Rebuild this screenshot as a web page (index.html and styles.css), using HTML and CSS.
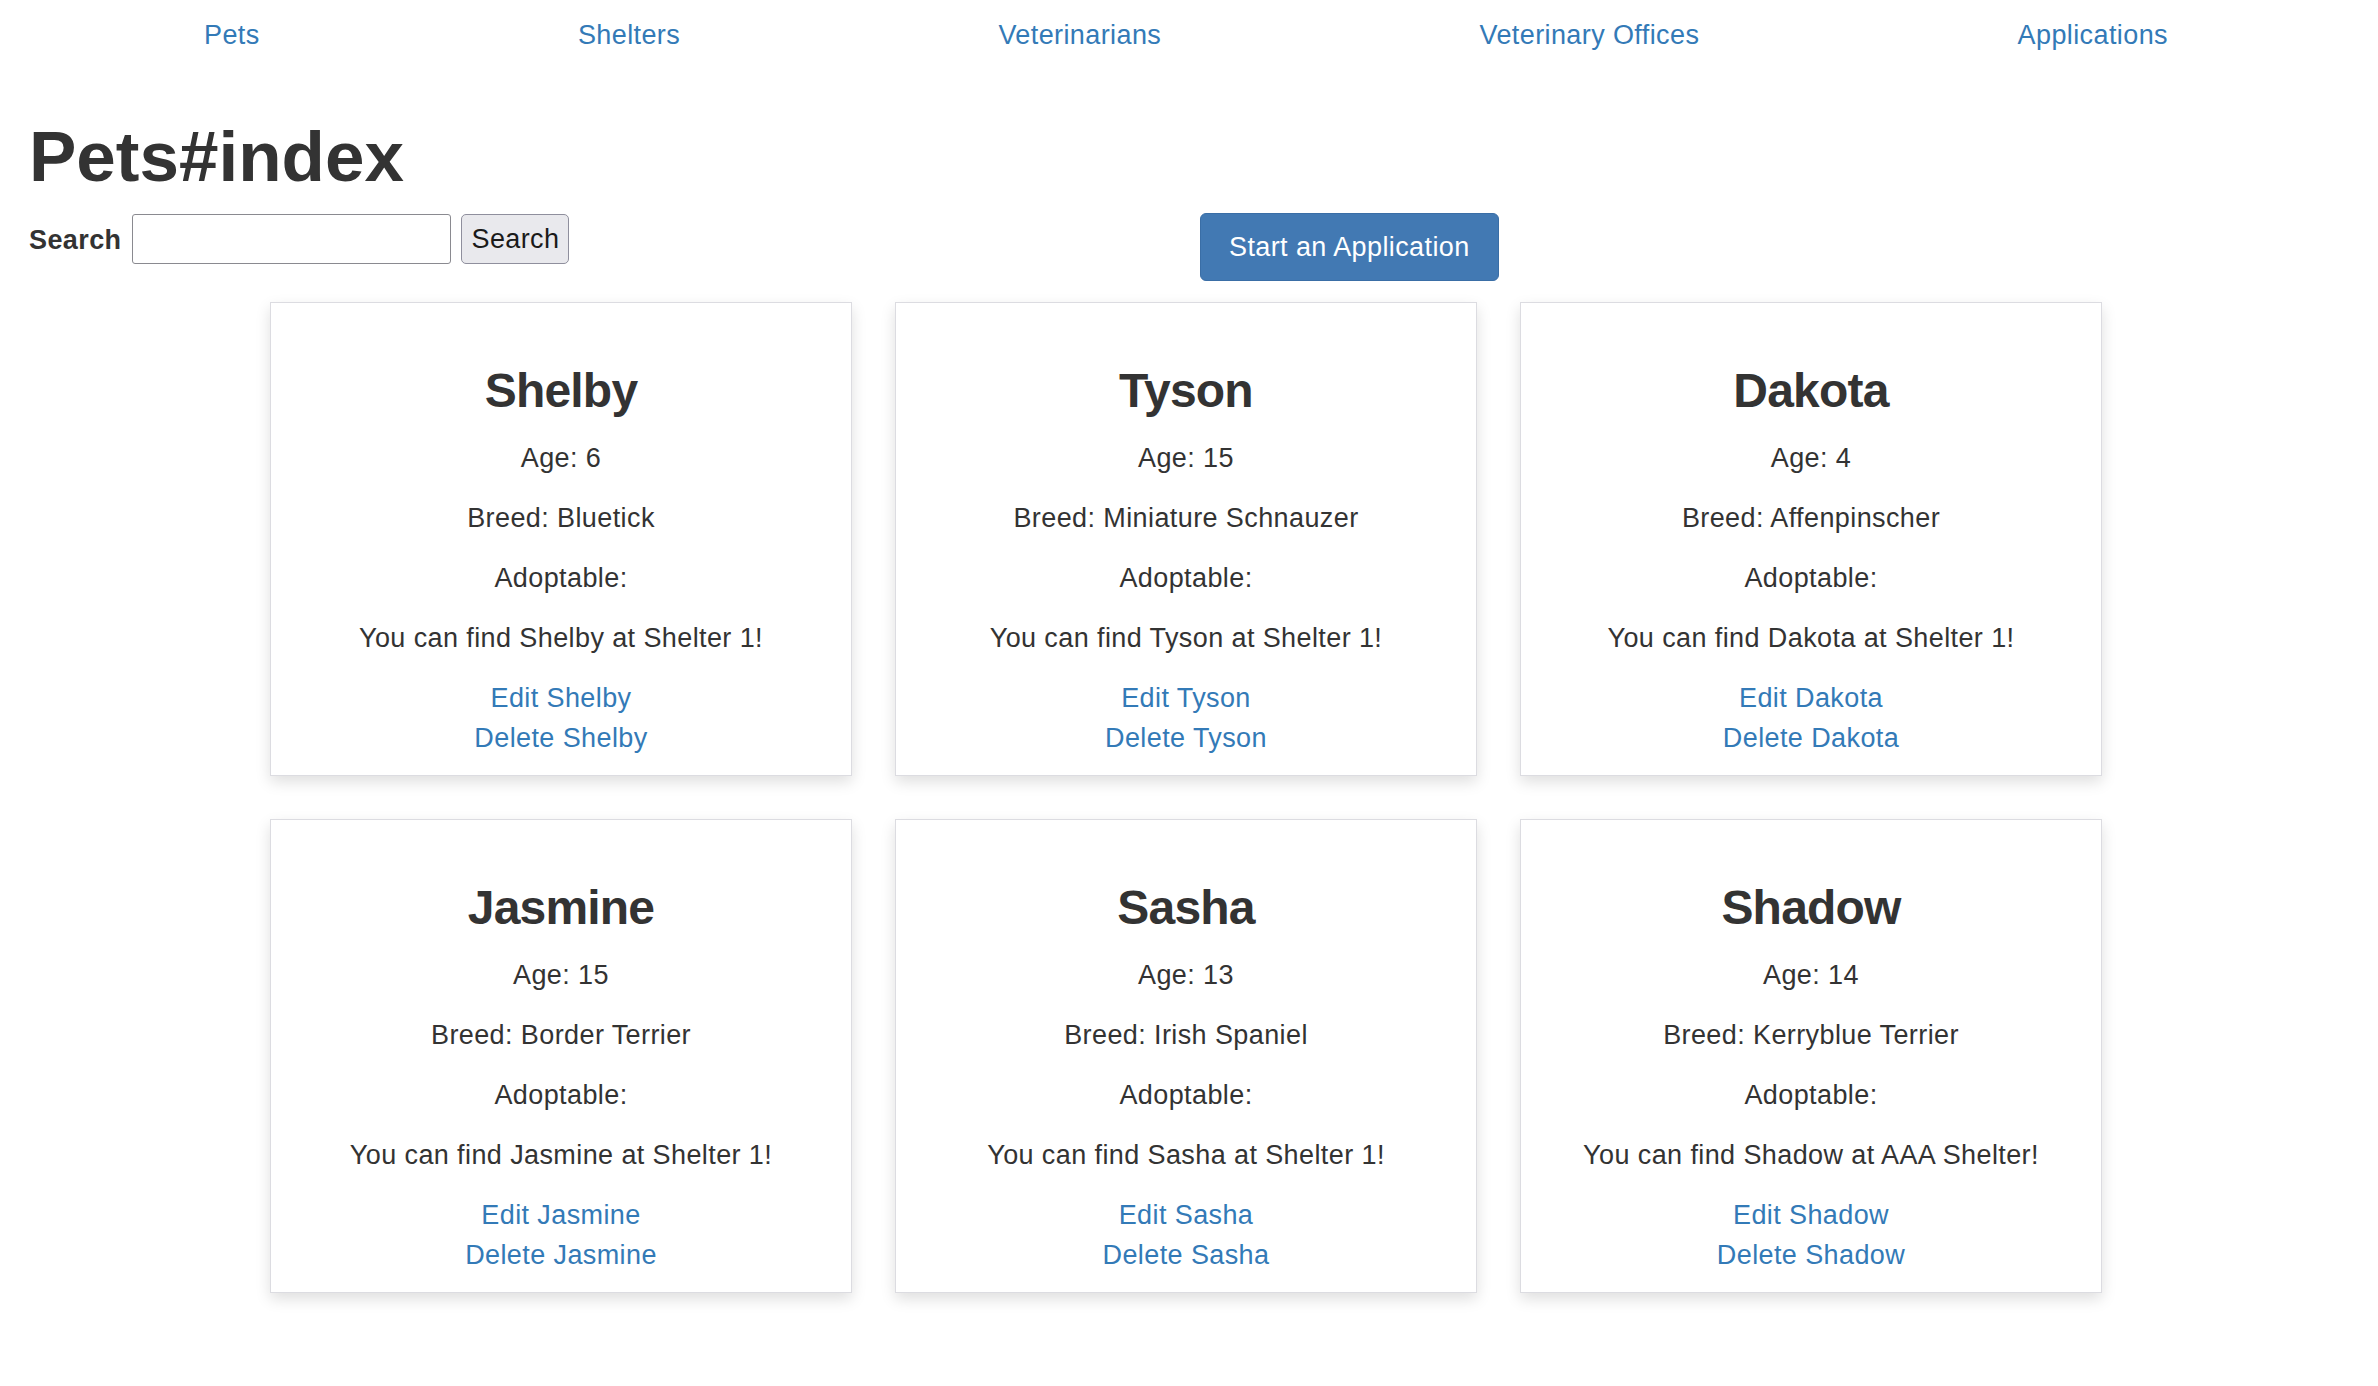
FILE: index.html
```html
<!DOCTYPE html>
<html lang="en">
<head>
<meta charset="utf-8">
<title>Pets#index</title>
<link rel="stylesheet" href="styles.css">
</head>
<body>
<nav class="topnav">
  <a href="#">Pets</a>
  <a href="#">Shelters</a>
  <a href="#">Veterinarians</a>
  <a href="#">Veterinary Offices</a>
  <a href="#">Applications</a>
</nav>
<main class="page">
  <h1 class="page-title">Pets#index</h1>
  <div class="toolbar">
    <form class="search-form">
      <label class="search-label" for="search">Search</label>
      <input class="search-input" id="search" type="text">
      <button class="search-btn" type="button">Search</button>
    </form>
    <a class="btn-primary" href="#">Start an Application</a>
  </div>
  <section class="cards">
    <div class="card">
      <h2>Shelby</h2>
      <p>Age: 6</p>
      <p>Breed: Bluetick</p>
      <p>Adoptable: </p>
      <p>You can find Shelby at Shelter 1!</p>
      <div class="card-links"><a href="#">Edit Shelby</a><a href="#">Delete Shelby</a></div>
    </div>
    <div class="card">
      <h2>Tyson</h2>
      <p>Age: 15</p>
      <p>Breed: Miniature Schnauzer</p>
      <p>Adoptable: </p>
      <p>You can find Tyson at Shelter 1!</p>
      <div class="card-links"><a href="#">Edit Tyson</a><a href="#">Delete Tyson</a></div>
    </div>
    <div class="card">
      <h2>Dakota</h2>
      <p>Age: 4</p>
      <p>Breed: Affenpinscher</p>
      <p>Adoptable: </p>
      <p>You can find Dakota at Shelter 1!</p>
      <div class="card-links"><a href="#">Edit Dakota</a><a href="#">Delete Dakota</a></div>
    </div>
    <div class="card">
      <h2>Jasmine</h2>
      <p>Age: 15</p>
      <p>Breed: Border Terrier</p>
      <p>Adoptable: </p>
      <p>You can find Jasmine at Shelter 1!</p>
      <div class="card-links"><a href="#">Edit Jasmine</a><a href="#">Delete Jasmine</a></div>
    </div>
    <div class="card">
      <h2>Sasha</h2>
      <p>Age: 13</p>
      <p>Breed: Irish Spaniel</p>
      <p>Adoptable: </p>
      <p>You can find Sasha at Shelter 1!</p>
      <div class="card-links"><a href="#">Edit Sasha</a><a href="#">Delete Sasha</a></div>
    </div>
    <div class="card">
      <h2>Shadow</h2>
      <p>Age: 14</p>
      <p>Breed: Kerryblue Terrier</p>
      <p>Adoptable: </p>
      <p>You can find Shadow at AAA Shelter!</p>
      <div class="card-links"><a href="#">Edit Shadow</a><a href="#">Delete Shadow</a></div>
    </div>
  </section>
</main>
</body>
</html>
```

FILE: styles.css
```css
* { box-sizing: border-box; }

html, body {
  margin: 0;
  padding: 0;
  background: #ffffff;
}

body {
  font-family: "Liberation Sans", Arial, Helvetica, sans-serif;
  font-size: 27px;
  letter-spacing: 0.4px;
  color: #333333;
}

a {
  color: #337ab7;
  text-decoration: none;
}

.topnav {
  display: flex;
  justify-content: space-between;
  padding: 15px 210px 0 204px;
  line-height: 40px;
  font-size: 27px;
}

.page {
  padding: 0 29px 60px 29px;
}

.page-title {
  margin: 63px 0 17px;
  font-size: 71px;
  line-height: 78px;
  font-weight: 700;
  letter-spacing: 0;
  color: #333333;
}

.toolbar {
  display: flex;
  align-items: flex-start;
}

.search-form {
  display: flex;
  align-items: center;
  width: 541px;
  height: 50px;
  margin: 1px 0 0;
}

.search-label {
  font-weight: 700;
  font-size: 27px;
  margin-right: 11px;
  padding-top: 2px;
}

.search-input {
  width: 319px;
  height: 50px;
  border: 1.5px solid #8a8a90;
  border-radius: 3px;
  font-size: 27px;
  font-family: inherit;
  padding: 0 6px;
  margin-right: 10px;
}

.search-btn {
  height: 50px;
  padding: 0 9px;
  border: 1.5px solid #8f8f9d;
  border-radius: 5px;
  background: #e9e9ed;
  color: #1a1a1a;
  font-family: inherit;
  font-size: 27px;
  letter-spacing: 0.4px;
}

.btn-primary {
  display: inline-block;
  margin-left: 630px;
  padding: 15px 28px 15px;
  font-size: 27px;
  line-height: 36px;
  color: #ffffff;
  background: #4279b3;
  border: 1.5px solid #3a6ea6;
  border-radius: 6px;
}

.cards {
  display: grid;
  grid-template-columns: repeat(3, 582px);
  column-gap: 43px;
  row-gap: 43px;
  margin: 21px 0 0 241px;
}

.card {
  border: 1.5px solid #dcdce1;
  background: #ffffff;
  box-shadow: 0 6px 14px 0 rgba(0, 0, 0, 0.13);
  padding: 32px 24px 17px;
  text-align: center;
}

.card h2 {
  margin: 30px 0 20px;
  font-size: 48px;
  line-height: 52.8px;
  font-weight: 700;
  letter-spacing: -0.8px;
  color: #333333;
}

.card p {
  margin: 20px 0;
  line-height: 40px;
}

.card-links a {
  display: block;
  line-height: 40px;
}
```
